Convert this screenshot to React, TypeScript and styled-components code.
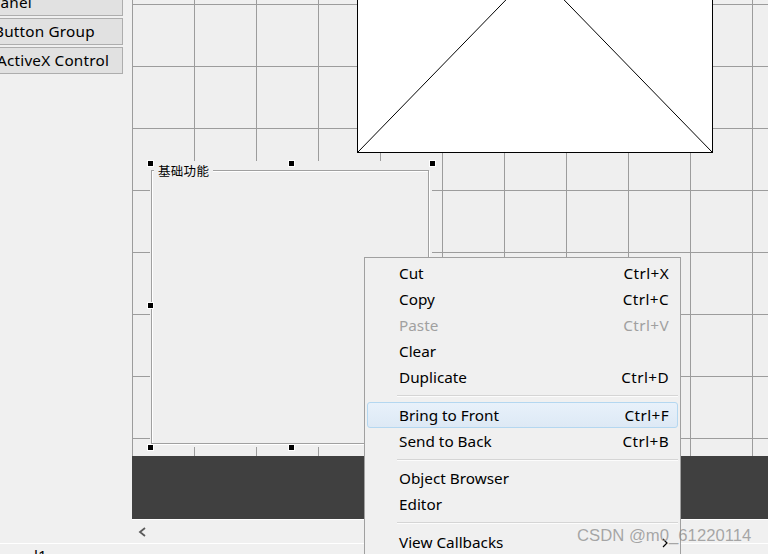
import React from "react";
import styled, { createGlobalStyle } from "styled-components";

const Global = createGlobalStyle`
  html, body { margin: 0; padding: 0; background: #f0f0f0; }
  body { font-family: "Noto Sans", "Noto Sans CJK SC", sans-serif; }
  * { box-sizing: border-box; }
`;

const UI_FONT = `"Noto Sans", "Noto Sans CJK SC", sans-serif`;

const Page = styled.div`
  position: relative;
  width: 768px;
  height: 554px;
  overflow: hidden;
  background: #f0f0f0;
  font-family: ${UI_FONT};
  font-size: 15.3px;
  color: #000;
`;

const Workspace = styled.div`
  display: flex;
  height: 543px;
`;

const Sidebar = styled.div`
  width: 132px;
  flex: none;
  overflow: hidden;
  display: flex;
  flex-direction: column;
  gap: 2px;
  margin-top: -11px;
`;

const PaletteButton = styled.div<{ $indent: number }>`
  width: 164px;
  height: 27px;
  margin-left: -41px;
  flex: none;
  background: #e1e1e1;
  border: 1px solid #adadad;
  display: flex;
  align-items: center;
  padding-left: ${(p) => p.$indent}px;
  white-space: nowrap;
  line-height: 1;
  letter-spacing: 0.2px;
`;

const EditorColumn = styled.div`
  flex: 1;
  display: flex;
  flex-direction: column;
  min-width: 0;
`;

const Canvas = styled.div`
  position: relative;
  height: 456px;
  flex: none;
  overflow: hidden;
  background-color: #efefef;
  background-image: linear-gradient(to right, #9c9c9c 1px, transparent 1px),
    linear-gradient(to bottom, #9c9c9c 1px, transparent 1px);
  background-size: 62px 62px;
  background-position: 0 4px;
`;

const Axes = styled.div`
  position: absolute;
  left: 225px;
  top: -31px;
  width: 356px;
  height: 184px;
  background: #fff;
  border: 1px solid #000;
  svg {
    display: block;
    width: 100%;
    height: 100%;
  }
`;

const Selection = styled.div`
  position: absolute;
  left: 18px;
  top: 161px;
  width: 282px;
  height: 286px;
  background: #efefef;
`;

const Handle = styled.div<{ $x: number; $y: number }>`
  position: absolute;
  left: ${(p) => p.$x}px;
  top: ${(p) => p.$y}px;
  width: 7px;
  height: 7px;
  background: #000;
  border: 1px solid #fff;
`;

const GroupFrame = styled.div`
  position: absolute;
  left: 1px;
  top: 9px;
  width: 278px;
  height: 274px;
  border: 1px solid #a0a0a0;
  box-shadow: inset 1px 1px 0 #fff, 1px 1px 0 #fff;
`;

const GroupTitle = styled.span`
  position: absolute;
  left: 2px;
  top: -7px;
  padding: 0 4px 0 4px;
  background: #efefef;
  font-family: "Noto Sans CJK SC", sans-serif;
  font-size: 12.5px;
  line-height: 13px;
  letter-spacing: 0.3px;
  color: #000;
`;

const FigureBand = styled.div`
  height: 63px;
  background: #404040;
  flex: none;
`;

const ScrollRow = styled.div`
  height: 24px;
  border-top: 1px solid #fff;
  display: flex;
  align-items: center;
  padding-left: 6px;
  flex: none;
`;

const StatusStrip = styled.div`
  height: 11px;
  border-top: 1px solid #fff;
  padding-left: 34px;
  overflow: hidden;
  line-height: 1;
  padding-top: 4px;
`;

const Menu = styled.div`
  position: absolute;
  left: 364px;
  top: 257px;
  width: 317px;
  height: 320px;
  background: #f0f0f0;
  border: 1px solid #a0a0a0;
  padding: 2px 2px;
  display: flex;
  flex-direction: column;
`;

const MenuItem = styled.div<{ $active?: boolean; $disabled?: boolean }>`
  height: 26px;
  flex: none;
  display: flex;
  align-items: center;
  justify-content: space-between;
  padding: 2px 8px 0 31px;
  border: 1px solid ${(p) => (p.$active ? "#b4d7f0" : "transparent")};
  border-radius: 3px;
  background: ${(p) =>
    p.$active ? "linear-gradient(#e8f1fa, #dde9f5)" : "transparent"};
  color: ${(p) => (p.$disabled ? "#a0a0a0" : "#000")};
  white-space: nowrap;
  line-height: 1;
`;

const Shortcut = styled.span`
  display: inline-flex;
  align-items: center;
  letter-spacing: 0.4px;
`;

const Separator = styled.div`
  height: 11.5px;
  flex: none;
  display: flex;
  align-items: center;
  padding-left: 30px;
  &::after {
    content: "";
    flex: 1;
    height: 1px;
    background: #d5d5d5;
    box-shadow: 0 1px 0 #fcfcfc;
  }
`;

const Watermark = styled.div`
  position: absolute;
  left: 577px;
  top: 526px;
  font-family: "Liberation Sans", Arial, sans-serif;
  font-size: 16.7px;
  line-height: 20px;
  color: rgba(140, 140, 140, 0.75);
  white-space: nowrap;
  pointer-events: none;
`;

const menu: Array<
  | { kind: "item"; label: string; key?: string; active?: boolean; disabled?: boolean; sub?: boolean }
  | { kind: "sep" }
> = [
  { kind: "item", label: "Cut", key: "Ctrl+X" },
  { kind: "item", label: "Copy", key: "Ctrl+C" },
  { kind: "item", label: "Paste", key: "Ctrl+V", disabled: true },
  { kind: "item", label: "Clear" },
  { kind: "item", label: "Duplicate", key: "Ctrl+D" },
  { kind: "sep" },
  { kind: "item", label: "Bring to Front", key: "Ctrl+F", active: true },
  { kind: "item", label: "Send to Back", key: "Ctrl+B" },
  { kind: "sep" },
  { kind: "item", label: "Object Browser" },
  { kind: "item", label: "Editor" },
  { kind: "sep" },
  { kind: "item", label: "View Callbacks", sub: true },
];

export default function App() {
  return (
    <Page>
      <Global />
      <Workspace>
        <Sidebar>
          <PaletteButton $indent={31}>Panel</PaletteButton>
          <PaletteButton $indent={34}>Button Group</PaletteButton>
          <PaletteButton $indent={37}>ActiveX Control</PaletteButton>
        </Sidebar>
        <EditorColumn>
          <Canvas>
            <Axes>
              <svg viewBox="0 0 354 182" preserveAspectRatio="none">
                <polyline
                  points="0,182 177,0 354,182"
                  fill="none"
                  stroke="#000"
                  strokeWidth="1"
                />
              </svg>
            </Axes>
            <Selection>
              <GroupFrame>
                <GroupTitle>基础功能</GroupTitle>
              </GroupFrame>
              <Handle $x={-3} $y={-1} />
              <Handle $x={138} $y={-1} />
              <Handle $x={279} $y={-1} />
              <Handle $x={-3} $y={141} />
              <Handle $x={-3} $y={283} />
              <Handle $x={138} $y={283} />
            </Selection>
          </Canvas>
          <FigureBand />
          <ScrollRow>
            <svg width="9" height="10" viewBox="0 0 9 10">
              <polyline points="7,1 2,5 7,9" fill="none" stroke="#5a5a5a" strokeWidth="1.8" />
            </svg>
          </ScrollRow>
        </EditorColumn>
      </Workspace>
      <StatusStrip>l1</StatusStrip>
      <Menu>
        {menu.map((m, i) =>
          m.kind === "sep" ? (
            <Separator key={i} />
          ) : (
            <MenuItem key={i} $active={m.active} $disabled={m.disabled}>
              <span>{m.label}</span>
              <Shortcut>
                {m.key}
                {m.sub && (
                  <svg width="8" height="10" viewBox="0 0 8 10">
                    <polyline points="2,1 6,5 2,9" fill="none" stroke="#000" strokeWidth="1.2" />
                  </svg>
                )}
              </Shortcut>
            </MenuItem>
          )
        )}
      </Menu>
      <Watermark>CSDN @m0_61220114</Watermark>
    </Page>
  );
}
